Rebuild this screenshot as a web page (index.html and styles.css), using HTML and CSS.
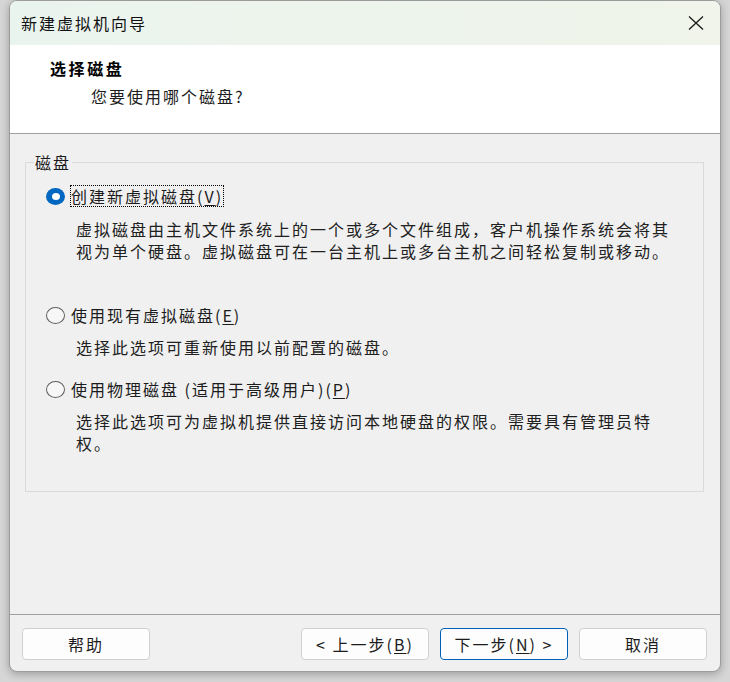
FILE: index.html
```html
<!DOCTYPE html>
<html lang="zh-CN">
<head>
<meta charset="utf-8">
<title>新建虚拟机向导</title>
<link rel="stylesheet" href="styles.css">
</head>
<body>
<div class="window">
  <div class="titlebar">
    <span class="title">新建虚拟机向导</span>
    <svg class="close" width="16" height="14" viewBox="0 0 16 14"><path d="M1 0.5 L15 13.5 M15 0.5 L1 13.5" stroke="#1a1a1a" stroke-width="1.3" fill="none"/></svg>
  </div>
  <div class="header">
    <div class="h-title">选择磁盘</div>
    <div class="h-sub">您要使用哪个磁盘?</div>
  </div>
  <div class="content">
    <fieldset class="group">
      <legend class="legend">磁盘</legend>
      <div class="row first">
        <span class="radio checked"></span>
        <span class="label focus">创建新虚拟磁盘(<u>V</u>)</span>
      </div>
      <p class="desc d1">虚拟磁盘由主机文件系统上的一个或多个文件组成，客户机操作系统会将其视为单个硬盘。虚拟磁盘可在一台主机上或多台主机之间轻松复制或移动。</p>
      <div class="row second">
        <span class="radio"></span>
        <span class="label">使用现有虚拟磁盘(<u>E</u>)</span>
      </div>
      <p class="desc">选择此选项可重新使用以前配置的磁盘。</p>
      <div class="row third">
        <span class="radio"></span>
        <span class="label">使用物理磁盘 (适用于高级用户)(<u>P</u>)</span>
      </div>
      <p class="desc">选择此选项可为虚拟机提供直接访问本地硬盘的权限。需要具有管理员特权。</p>
    </fieldset>
  </div>
  <div class="footer">
    <button class="btn">帮助</button>
    <div class="spacer"></div>
    <button class="btn">&lt; 上一步(<u>B</u>)</button>
    <button class="btn primary">下一步(<u>N</u>) &gt;</button>
    <button class="btn">取消</button>
  </div>
</div>
</body>
</html>
```
FILE: styles.css
```css
html, body {
  margin: 0;
  padding: 0;
}
body {
  width: 730px;
  height: 682px;
  overflow: hidden;
  background: #d6d6d6;
  font-family: "Noto Sans CJK SC", "Noto Sans", sans-serif;
  color: #1c1c1c;
}
.window {
  box-sizing: border-box;
  margin-left: 9px;
  width: 712px;
  height: 672px;
  border: 1px solid #9c9c9c;
  border-radius: 8px;
  overflow: hidden;
  background: #f0f0f0;
  display: flex;
  flex-direction: column;
  box-shadow: 0 2px 8px rgba(0, 0, 0, 0.28);
}
.titlebar {
  height: 44px;
  flex: none;
  display: flex;
  align-items: center;
  justify-content: space-between;
  padding: 0 16px 0 11px;
  background: linear-gradient(to right, #eaf4ee, #f0f4ea);
}
.title {
  font-size: 16px;
  letter-spacing: 2px;
  line-height: 22px;
  color: #111;
}
.close {
  display: block;
  margin-top: -1px;
}
.header {
  height: 89px;
  flex: none;
  box-sizing: border-box;
  background: #ffffff;
  border-bottom: 1px solid #a0a0a0;
  padding: 12px 0 0 40px;
}
.h-title {
  font-size: 16px;
  font-weight: 700;
  letter-spacing: 2.6px;
  line-height: 22px;
  color: #000;
}
.h-sub {
  margin-top: 6px;
  margin-left: 41px;
  font-size: 16px;
  letter-spacing: 2px;
  line-height: 22px;
  color: #1c1c1c;
}
.content {
  flex: 1;
  padding: 18px 16px 0 15px;
}
.group {
  margin: 0;
  padding: 0 20px 37px 20px;
  border: 1px solid #dadada;
  min-width: 0;
}
.legend {
  margin-left: -12px;
  padding: 0 1px;
  font-size: 16px;
  letter-spacing: 2px;
  line-height: 20px;
  color: #1c1c1c;
}
.row {
  display: flex;
  align-items: center;
  height: 22px;
}
.row.first { margin-top: 13px; }
.row.second { margin-top: 42px; }
.row.third { margin-top: 20px; }
.radio {
  box-sizing: border-box;
  width: 19px;
  height: 17px;
  border-radius: 50%;
  border: 1px solid #5e5e5e;
  background: #f7f7f7;
  margin-right: 5px;
  flex: none;
  display: flex;
  align-items: center;
  justify-content: center;
}
.radio.checked {
  border: none;
  background: #0067c0;
}
.radio.checked::after {
  content: "";
  width: 8px;
  height: 7px;
  border-radius: 50%;
  background: #ffffff;
}
.label {
  box-sizing: border-box;
  border: 1px dotted transparent;
  height: 22px;
  line-height: 20px;
  font-size: 16px;
  letter-spacing: 2px;
  white-space: nowrap;
  color: #1c1c1c;
}
.label.focus {
  border-color: #000;
}
u {
  text-decoration: underline;
  text-underline-offset: 2px;
  text-decoration-thickness: 1px;
}
.desc {
  margin: 10px 0 0 30px;
  width: 602px;
  font-size: 16px;
  letter-spacing: 2px;
  line-height: 22px;
  color: #202020;
}
.desc.d1 {
  margin-top: 11px;
}
.footer {
  height: 57px;
  flex: none;
  box-sizing: border-box;
  border-top: 1px solid #a0a0a0;
  display: flex;
  align-items: flex-start;
  gap: 11px;
  padding: 13px 13px 0 12px;
}
.spacer {
  flex: 1;
}
.btn {
  box-sizing: border-box;
  width: 128px;
  height: 32px;
  border: 1px solid #d0d0d0;
  border-radius: 4px;
  background: #fdfdfd;
  font-family: "Noto Sans CJK SC", "Noto Sans", sans-serif;
  font-size: 16px;
  letter-spacing: 2px;
  color: #1c1c1c;
  padding: 0;
  line-height: 30px;
}
.btn.primary {
  border: 1px solid #005fb8;
}
```
